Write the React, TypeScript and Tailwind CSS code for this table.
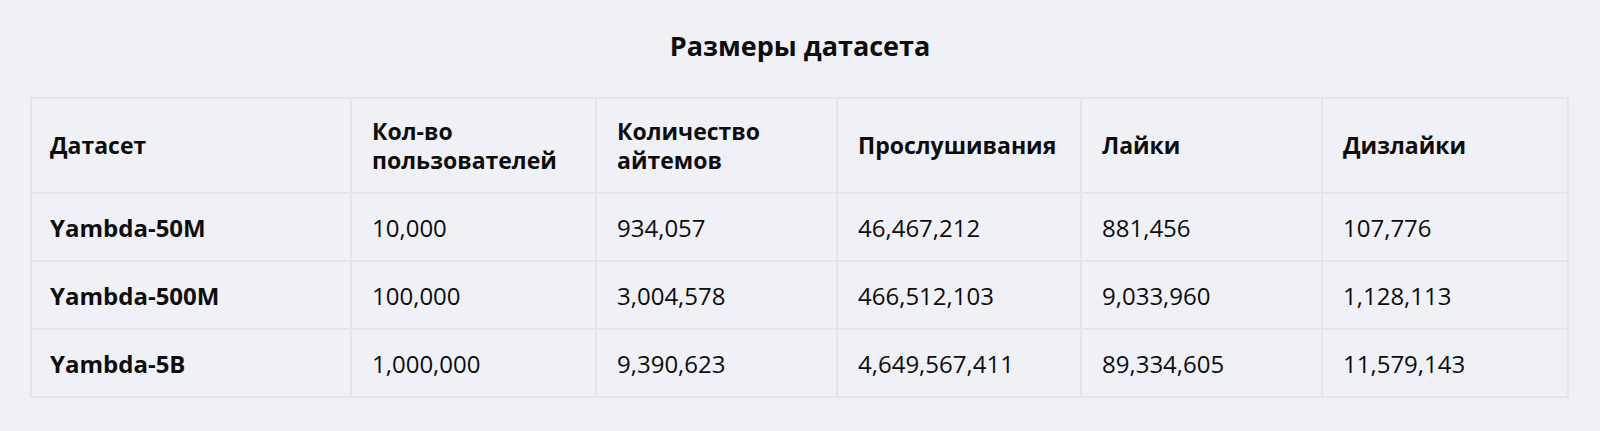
const columns = ['Датасет', 'Кол-во пользователей', 'Количество айтемов', 'Прослушивания', 'Лайки', 'Дизлайки']

const rows = [
  ['Yambda-50M', '10,000', '934,057', '46,467,212', '881,456', '107,776'],
  ['Yambda-500M', '100,000', '3,004,578', '466,512,103', '9,033,960', '1,128,113'],
  ['Yambda-5B', '1,000,000', '9,390,623', '4,649,567,411', '89,334,605', '11,579,143'],
]

const widths = ['w-[320px]', 'w-[245px]', 'w-[241px]', 'w-[244px]', 'w-[241px]', 'w-[246px]']

export default function App() {
  return (
    <div className="min-h-[431px] bg-[#f0f1f6] pt-[28px] text-[#0d0d0d] [font-family:'Open_Sans',sans-serif]">
      <h2 className="mb-[33px] text-center text-[27px] font-bold leading-[36px]">Размеры датасета</h2>
      <div className="px-[30px]">
        <table className="w-[1539px] table-fixed border-collapse border-2 border-[#e4e5ea]">
          <colgroup>
            {widths.map((w, i) => (
              <col key={i} className={w} />
            ))}
          </colgroup>
          <thead>
            <tr className="h-[95px]">
              {columns.map((c, i) => (
                <th
                  key={c}
                  className={`border-2 border-[#e4e5ea] pr-4 text-left align-middle text-[23px] font-bold leading-[29px] ${i === 0 ? 'pl-[18px]' : 'pl-[20px]'}`}
                >
                  {c}
                </th>
              ))}
            </tr>
          </thead>
          <tbody>
            {rows.map((r) => (
              <tr key={r[0]} className="h-[68px]">
                {r.map((v, i) => (
                  <td
                    key={i}
                    className={`border-2 border-[#e4e5ea] pr-4 align-middle text-[24px] leading-[29px] ${i === 0 ? 'pl-[18px] font-bold' : 'pl-[20px]'}`}
                  >
                    {v}
                  </td>
                ))}
              </tr>
            ))}
          </tbody>
        </table>
      </div>
    </div>
  )
}
